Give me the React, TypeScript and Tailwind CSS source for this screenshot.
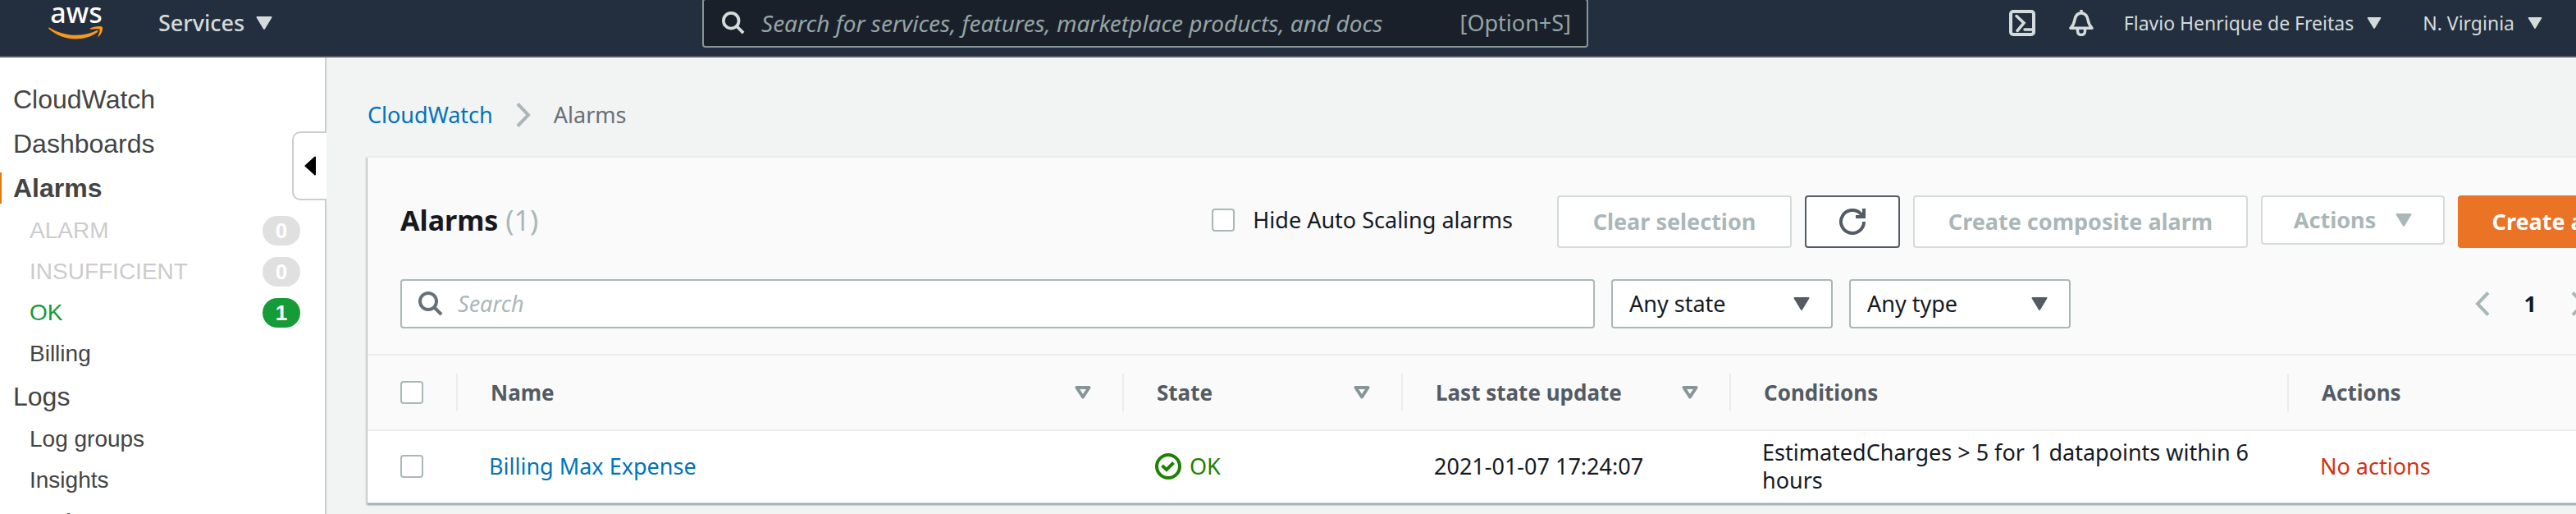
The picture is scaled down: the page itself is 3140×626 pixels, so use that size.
import type { ReactNode } from "react";

function CaretDown({ className }: { className: string }) {
  return (
    <svg viewBox="0 0 20 16" className={className} aria-hidden="true">
      <path d="M1.500 1h17L10 15z" fill="currentColor" stroke="currentColor" strokeWidth="2" strokeLinejoin="round" />
    </svg>
  );
}

function SearchIcon({ className }: { className: string }) {
  return (
    <svg viewBox="0 0 30 30" fill="none" stroke="currentColor" strokeWidth="4" className={className} aria-hidden="true">
      <circle cx="12" cy="12" r="10" />
      <path d="M19 19l9 9" />
    </svg>
  );
}

function Chevron({ left = false }: { left?: boolean }) {
  return (
    <svg viewBox="0 0 18 30" fill="none" stroke="currentColor" strokeWidth="4" className="h-[30px] w-[18px] shrink-0 text-[#aab7b8]" aria-hidden="true">
      <path d={left ? "M16 1.5L3 15l13 13.5" : "M2 1.5L15 15 2 28.5"} />
    </svg>
  );
}

function SortIcon() {
  return (
    <svg viewBox="0 0 20 16" fill="none" className="h-4 w-5 text-[#879596]" aria-hidden="true">
      <path d="M2.500 2h15L10 13.500z" stroke="currentColor" strokeWidth="4" strokeLinejoin="round" />
    </svg>
  );
}

function Checkbox({ id, label }: { id: string; label?: string }) {
  return (
    <input
      id={id}
      type="checkbox"
      aria-label={label}
      className="block size-7 shrink-0 appearance-none rounded-[4px] border-2 border-[#aab7b8] bg-white checked:bg-[#0073bb]"
    />
  );
}

function TopBar() {
  return (
    <header className="flex h-[70px] shrink-0 items-start border-b-2 border-[#545b64] bg-[#232f3e] text-[#d5dbdb]">
      <div className="flex w-[856px] shrink-0 items-start pl-[59px]">
        <a href="#home" className="flex w-[68px] flex-col items-center">
          <span className="text-[34px] leading-[30px] font-medium text-white">aws</span>
          <svg viewBox="0 0 68 16" className="mt-[2px] h-4 w-[68px]" fill="#f7981f" aria-hidden="true">
            <path d="M1 1.500C20 13 41 13.500 58.500 5.200c1.600-.7 2.900.8 1.300 2C45 18.500 18 19 .5 3 -.3 2.200.2 1 1 1.500z" />
            <path d="M51 2.500c4-2.500 13.500-3.200 14.800-1.500 1.200 1.700-.6 8.400-4.400 11.500-.8.600-1.500.2-1.100-.6 1.200-2.600 3-7 2.200-8-.9-1.100-7-.6-10.400-.2-1.200.1-1.800-.7-1.100-1.200z" />
          </svg>
        </a>
        <button className="ml-[66px] flex h-14 items-center gap-[14px] text-[27px] font-medium">
          Services
          <CaretDown className="h-4 w-5" />
        </button>
      </div>
      <label className="-mt-0.5 flex h-[60px] w-[1080px] items-center rounded-[4px] border-2 border-[#879596] bg-[#1a202a] pr-[19px] pl-[22px]">
        <SearchIcon className="mr-[20px] size-7 shrink-0" />
        <input
          aria-label="Search services"
          placeholder="Search for services, features, marketplace products, and docs"
          className="min-w-0 flex-1 bg-transparent text-[28px] italic outline-none placeholder:text-[#95a5a6]"
        />
        <span className="text-[27px] text-[#95a5a6]">[Option+S]</span>
      </label>
      <div className="ml-auto flex h-14 items-center pr-[41px] text-[23px]">
        <button aria-label="CloudShell" className="mr-[40px]">
          <svg viewBox="0 0 32 32" fill="none" stroke="currentColor" strokeWidth="4" className="size-8">
            <rect x="2" y="2" width="28" height="28" rx="3" />
            <path d="M9 7.500l9 8.500-8 9.500M19 24h11" strokeWidth="3.500" strokeLinecap="round" />
          </svg>
        </button>
        <button aria-label="Notifications" className="mr-[36px]">
          <svg viewBox="0 0 32 32" fill="none" stroke="currentColor" strokeWidth="3.500" className="size-8">
            <path d="M16 0v4M3 22.200h26c-3-3-4-5-5-10.200-.8-4.500-3.500-8-8-8s-7.200 3.500-8 8C7 17.200 6 19.200 3 22.200z" strokeLinejoin="round" />
            <path d="M11.500 23v3c0 6 9 6 9 0v-3" />
          </svg>
        </button>
        <button className="flex items-center gap-4">
          Flavio Henrique de Freitas
          <CaretDown className="h-[14px] w-[18px]" />
        </button>
        <button className="ml-[50px] flex items-center gap-4">
          N. Virginia
          <CaretDown className="h-[14px] w-[18px]" />
        </button>
      </div>
    </header>
  );
}

const mainItem = "flex h-[54px] shrink-0 items-center pl-4 text-[32px]";
const subItem = "flex h-[50px] shrink-0 items-center justify-between pr-[30px] pl-9 text-[28px]";

function Count({ children, tone }: { children: ReactNode; tone: string }) {
  return (
    <span className={`flex h-9 w-[46px] items-center justify-center rounded-full text-[26px] font-bold text-white ${tone}`}>
      {children}
    </span>
  );
}

function Sidebar() {
  return (
    <nav className="relative flex w-[398px] shrink-0 flex-col border-r-2 border-[#ccc] bg-white pt-6 font-['Liberation_Sans',Arial,sans-serif] text-[#444]">
      <a href="#cloudwatch" className={mainItem}>CloudWatch</a>
      <a href="#dashboards" className={mainItem}>Dashboards</a>
      <a href="#alarms" className="flex h-[54px] shrink-0 items-center text-[32px] font-bold">
        <span className="mr-[14px] h-[38px] w-0.5 bg-[#e47911]" />
        Alarms
      </a>
      <a href="#alarm" className={`${subItem} text-[#ccc]`}>ALARM<Count tone="bg-[#e0e0e0]">0</Count></a>
      <a href="#insufficient" className={`${subItem} text-[#ccc]`}>INSUFFICIENT<Count tone="bg-[#e0e0e0]">0</Count></a>
      <a href="#ok" className={`${subItem} text-[#169b39]`}>OK<Count tone="bg-[#169b39]">1</Count></a>
      <a href="#billing" className={subItem}>Billing</a>
      <a href="#logs" className={mainItem}>Logs</a>
      <a href="#log-groups" className={subItem}>Log groups</a>
      <a href="#insights" className={subItem}>Insights</a>
      <a href="#metrics" className={mainItem}>Metrics</a>
      <button
        aria-label="Collapse navigation"
        className="absolute top-[90px] -right-0.5 flex h-[84px] w-[42px] items-center justify-center rounded-l-[10px] border-2 border-r-0 border-[#ccc] bg-white"
      >
        <svg viewBox="0 0 14 24" className="h-6 w-[14px]" aria-hidden="true">
          <path d="M13 1.500v21L1.500 12z" fill="#000" stroke="#000" strokeWidth="2" strokeLinejoin="round" />
        </svg>
      </button>
    </nav>
  );
}

function FilterSelect({ id, label, value }: { id: string; label: string; value: string }) {
  return (
    <div className="relative w-[270px] shrink-0">
      <select
        id={id}
        aria-label={label}
        className="h-[60px] w-full appearance-none rounded-[4px] border-2 border-[#aab7b8] bg-white pr-16 pl-5 text-[27px]"
      >
        <option>{value}</option>
      </select>
      <CaretDown className="pointer-events-none absolute top-[22px] right-7 h-4 w-5 text-[#545b64]" />
    </div>
  );
}

const disabledButton = "h-16 shrink-0 rounded-[4px] border-2 border-[#d5dbdb] bg-white font-bold text-[#aab7b8]";

function HeaderCell({ children, sortable = false }: { children: ReactNode; sortable?: boolean }) {
  return (
    <th scope="col" className="p-0">
      <div className="flex h-[46px] items-center justify-between border-r-2 border-[#eaeded] pr-[38px] pl-10 text-left">
        {children}
        {sortable && (
          <button aria-label="Sort">
            <SortIcon />
          </button>
        )}
      </div>
    </th>
  );
}

function AlarmTable() {
  return (
    <table className="w-full table-fixed border-collapse text-[27px] leading-[34px]">
      <colgroup>
        <col className="w-[110px]" />
        <col className="w-[812px]" />
        <col className="w-[340px]" />
        <col className="w-[400px]" />
        <col className="w-[680px]" />
        <col />
      </colgroup>
      <thead className="bg-[#fafafa] text-[26px] text-[#545b64]">
        <tr className="h-[92px] border-y-2 border-[#eaeded]">
          <th scope="col" className="p-0">
            <div className="flex h-[46px] items-center border-r-2 border-[#eaeded] pl-10">
              <Checkbox id="select-all" label="Select all alarms" />
            </div>
          </th>
          <HeaderCell sortable>Name</HeaderCell>
          <HeaderCell sortable>State</HeaderCell>
          <HeaderCell sortable>Last state update</HeaderCell>
          <HeaderCell>Conditions</HeaderCell>
          <HeaderCell>Actions</HeaderCell>
        </tr>
      </thead>
      <tbody>
        <tr className="h-[88px] border-b-2 border-[#eaeded]">
          <td className="p-0 pl-10">
            <Checkbox id="select-billing" label="Select Billing Max Expense" />
          </td>
          <td className="p-0 pl-[38px]">
            <a href="#billing-max-expense" className="text-[#0073bb]">Billing Max Expense</a>
          </td>
          <td className="p-0 pl-[38px]">
            <span className="flex items-center gap-2.5 text-[#1d8102]">
              <svg viewBox="0 0 32 32" fill="none" stroke="currentColor" strokeWidth="4" className="size-8" aria-hidden="true">
                <circle cx="16" cy="16" r="14" />
                <path d="M8.500 15l5.500 5 8.500-8.500" />
              </svg>
              OK
            </span>
          </td>
          <td className="p-0 pl-[38px]">2021-01-07 17:24:07</td>
          <td className="p-0 pr-8 pl-[38px]">EstimatedCharges &gt; 5 for 1 datapoints within 6 hours</td>
          <td className="p-0 pl-[38px] text-[#d13212]">No actions</td>
        </tr>
      </tbody>
    </table>
  );
}

export default function App() {
  return (
    <div className="flex h-screen flex-col overflow-hidden bg-[#f2f3f3] font-['Noto_Sans','Open_Sans',sans-serif] text-[#16191f]">
      <TopBar />
      <div className="flex min-h-0 flex-1">
        <Sidebar />
        <main className="min-w-0 flex-1 overflow-hidden pl-[50px]">
          <nav aria-label="Breadcrumb" className="flex h-[120px] items-center gap-7 pt-5 text-[27px]">
            <a href="#cloudwatch" className="text-[#0073bb]">CloudWatch</a>
            <Chevron />
            <span className="text-[#687078]">Alarms</span>
          </nav>
          <section className="-mr-[154px] border-t-2 border-[#eaeded] bg-white shadow-[0_2px_2px_0_rgba(0,28,36,0.3),-2px_2px_2px_0_rgba(0,28,36,0.15)]">
            <div className="bg-[#fafafa] px-10 pt-[46px] pb-[31px]">
              <div className="flex items-start gap-4 text-[27px]">
                <h1 className="mr-auto text-[34px] leading-[60px] font-bold">
                  Alarms <span className="font-normal text-[#aab7b8]">(1)</span>
                </h1>
                <div className="mr-[38px] flex h-[60px] items-center gap-[22px]">
                  <Checkbox id="hide-auto-scaling" />
                  <label htmlFor="hide-auto-scaling">Hide Auto Scaling alarms</label>
                </div>
                <button disabled className={`${disabledButton} w-[286px]`}>Clear selection</button>
                <button aria-label="Refresh" className="flex h-16 w-[116px] shrink-0 items-center justify-center rounded-[4px] border-2 border-[#545b64] bg-white text-[#545b64]">
                  <svg viewBox="0 0 32 32" fill="none" stroke="currentColor" strokeWidth="4" className="size-8">
                    <path d="M30 16a14 14 0 1 1-4-9.800l3 3.800" />
                    <path d="M30 0v10H20" />
                  </svg>
                </button>
                <button disabled className={`${disabledButton} w-[408px]`}>Create composite alarm</button>
                <button disabled className="flex h-[60px] w-[224px] shrink-0 items-center justify-center gap-6 rounded-[4px] border-2 border-[#d5dbdb] bg-white font-bold text-[#aab7b8]">
                  Actions
                  <CaretDown className="h-4 w-5" />
                </button>
                <button className="h-16 w-[258px] shrink-0 rounded-[4px] bg-[#eb7326] font-bold text-white">Create alarm</button>
              </div>
              <div className="mt-[38px] flex items-center gap-5">
                <label className="flex h-[60px] max-w-[1456px] flex-1 items-center rounded-[4px] border-2 border-[#aab7b8] bg-white px-5">
                  <SearchIcon className="mr-[18px] size-[30px] shrink-0 text-[#687078]" />
                  <input
                    aria-label="Search alarms"
                    placeholder="Search"
                    className="min-w-0 flex-1 bg-transparent text-[27px] italic outline-none placeholder:text-[#aab7b8]"
                  />
                </label>
                <FilterSelect id="state-filter" label="State" value="Any state" />
                <FilterSelect id="type-filter" label="Type" value="Any type" />
                <div className="ml-auto flex items-center gap-[42px] pr-[102px]">
                  <button aria-label="Previous page"><Chevron left /></button>
                  <span className="text-[27px] font-bold">1</span>
                  <button aria-label="Next page"><Chevron /></button>
                </div>
              </div>
            </div>
            <AlarmTable />
          </section>
        </main>
      </div>
    </div>
  );
}
